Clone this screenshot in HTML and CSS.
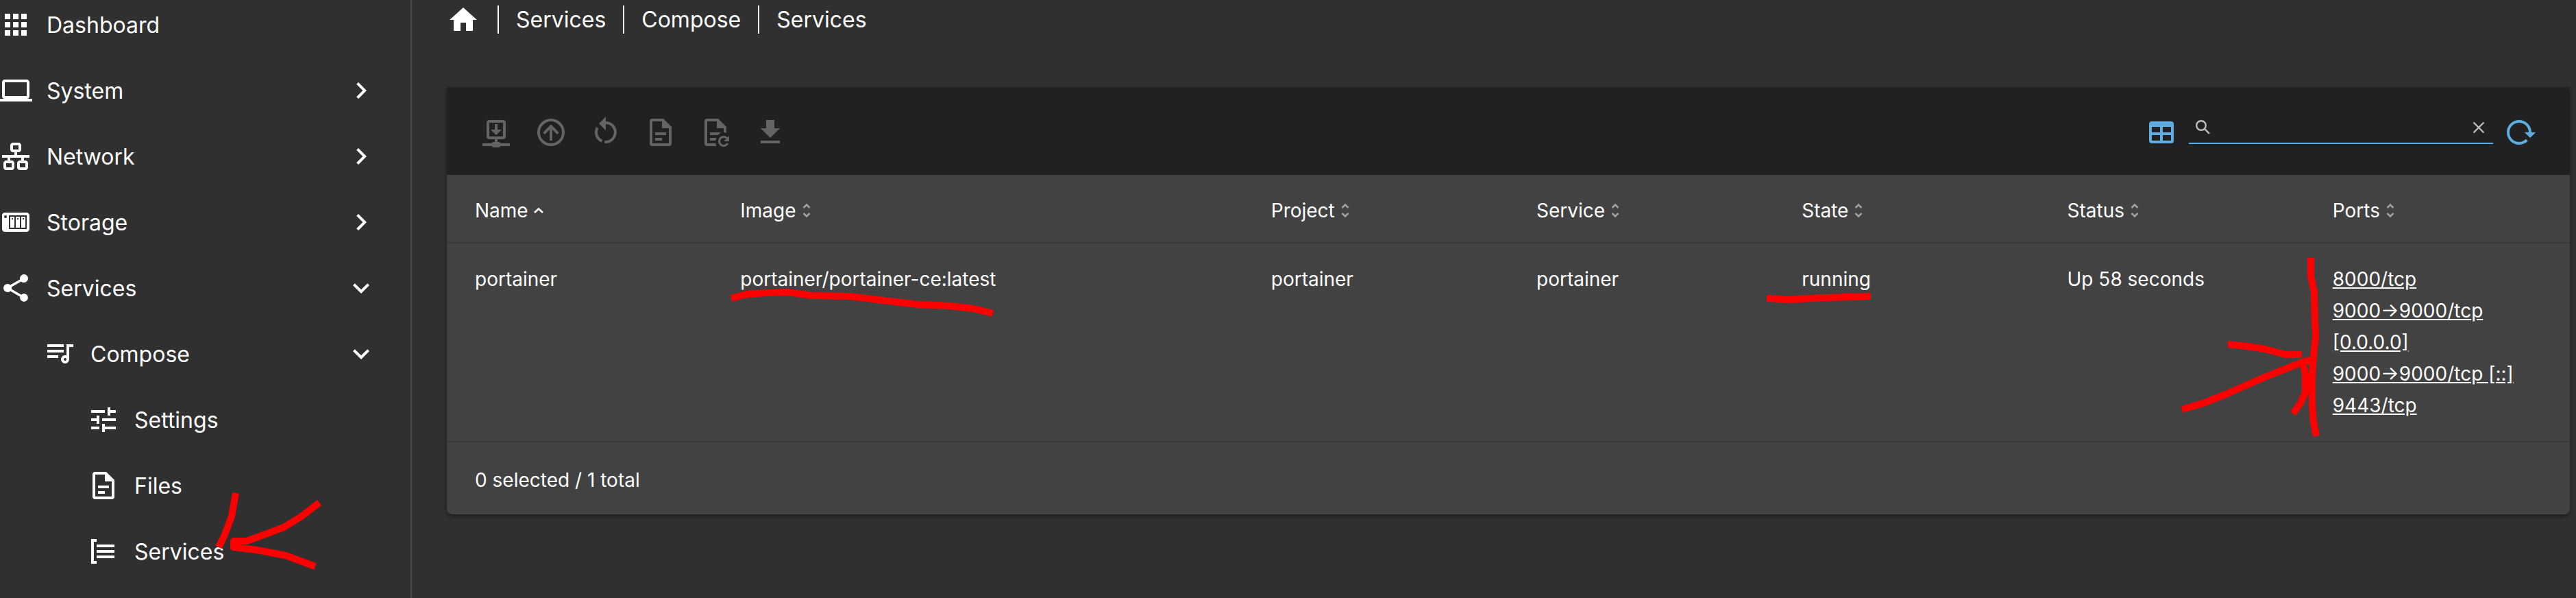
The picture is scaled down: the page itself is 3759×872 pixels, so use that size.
FILE: index.html
```html
<!DOCTYPE html>
<html lang="en">
<head>
<meta charset="utf-8">
<title>Services | Compose | Services</title>
<link rel="stylesheet" href="styles.css">
</head>
<body>
<div class="app">
  <nav class="sidebar" aria-label="Main">
    <a class="nav-item" href="#"><svg class="icon" viewBox="0 0 24 24"><path d="M16,20H20V16H16M16,14H20V10H16M10,8H14V4H10M16,8H20V4H16M10,14H14V10H10M4,14H8V10H4M4,20H8V16H4M10,20H14V16H10M4,8H8V4H4V8Z"/></svg><span class="nav-label">Dashboard</span></a>
    <a class="nav-item" href="#"><svg class="icon" viewBox="0 0 24 24"><path d="M4,6H20V16H4M20,18A2,2 0 0,0 22,16V6C22,4.89 21.1,4 20,4H4C2.89,4 2,4.89 2,6V16A2,2 0 0,0 4,18H0V20H24V18H20Z"/></svg><span class="nav-label">System</span><svg class="icon" viewBox="0 0 24 24"><path d="M8.59,16.58L13.17,12L8.59,7.41L10,6L16,12L10,18L8.59,16.58Z"/></svg></a>
    <a class="nav-item" href="#"><svg class="icon" viewBox="0 0 24 24"><path d="M10,2C8.89,2 8,2.89 8,4V7C8,8.11 8.89,9 10,9H11V11H2V13H6V15H5C3.89,15 3,15.89 3,17V20C3,21.11 3.89,22 5,22H9C10.11,22 11,21.11 11,20V17C11,15.89 10.11,15 9,15H8V13H16V15H15C13.89,15 13,15.89 13,17V20C13,21.11 13.89,22 15,22H19C20.11,22 21,21.11 21,20V17C21,15.89 20.11,15 19,15H18V13H22V11H13V9H14C15.11,9 16,8.11 16,7V4C16,2.89 15.11,2 14,2H10M10,4H14V7H10V4M5,17H9V20H5V17M15,17H19V20H15V17Z"/></svg><span class="nav-label">Network</span><svg class="icon" viewBox="0 0 24 24"><path d="M8.59,16.58L13.17,12L8.59,7.41L10,6L16,12L10,18L8.59,16.58Z"/></svg></a>
    <a class="nav-item" href="#"><svg class="icon" viewBox="0 0 24 24"><path fill-rule="evenodd" d="M4,5C2.89,5 2,5.89 2,7V17C2,18.11 2.89,19 4,19H20C21.11,19 22,18.11 22,17V7C22,5.89 21.11,5 20,5H4M4.5,7A1,1 0 0,1 5.5,8A1,1 0 0,1 4.5,9A1,1 0 0,1 3.5,8A1,1 0 0,1 4.5,7M7,7H20V17H7V7M8,8V16H11V8H8M12,8V16H15V8H12M16,8V16H19V8H16M9,9H10V10H9V9M13,9H14V10H13V9M17,9H18V10H17V9Z"/></svg><span class="nav-label">Storage</span><svg class="icon" viewBox="0 0 24 24"><path d="M8.59,16.58L13.17,12L8.59,7.41L10,6L16,12L10,18L8.59,16.58Z"/></svg></a>
    <a class="nav-item" href="#"><svg class="icon" viewBox="0 0 24 24"><path d="M18,16.08C17.24,16.08 16.56,16.38 16.04,16.85L8.91,12.7C8.96,12.47 9,12.24 9,12C9,11.76 8.96,11.53 8.91,11.3L15.96,7.19C16.5,7.69 17.21,8 18,8A3,3 0 0,0 21,5A3,3 0 0,0 18,2A3,3 0 0,0 15,5C15,5.24 15.04,5.47 15.09,5.7L8.04,9.81C7.5,9.31 6.79,9 6,9A3,3 0 0,0 3,12A3,3 0 0,0 6,15C6.79,15 7.5,14.69 8.04,14.19L15.16,18.34C15.11,18.55 15.08,18.77 15.08,19C15.08,20.61 16.39,21.91 18,21.91C19.61,21.91 20.92,20.61 20.92,19A2.92,2.92 0 0,0 18,16.08Z"/></svg><span class="nav-label">Services</span><svg class="icon" viewBox="0 0 24 24"><path d="M7.41,8.58L12,13.17L16.59,8.58L18,10L12,16L6,10L7.41,8.58Z"/></svg></a>
    <a class="nav-item level-1" href="#"><svg class="icon" viewBox="0 0 24 24"><path fill-rule="evenodd" d="M3,5H15V7H3V5M3,9H15V11H3V9M3,13H11V15H3V13M17,5H22V7H19V16A3,3 0 1,1 17,13.17V5M16,15A1,1 0 0,0 16,17A1,1 0 0,0 16,15Z"/></svg><span class="nav-label">Compose</span><svg class="icon" viewBox="0 0 24 24"><path d="M7.41,8.58L12,13.17L16.59,8.58L18,10L12,16L6,10L7.41,8.58Z"/></svg></a>
    <a class="nav-item level-2" href="#"><svg class="icon" viewBox="0 0 24 24"><path d="M3,17V19H9V17H3M3,5V7H13V5H3M13,21V19H21V17H13V15H11V21H13M7,9V11H3V13H7V15H9V9H7M21,13V11H11V13H21M15,9H17V7H21V5H17V3H15V9Z"/></svg><span class="nav-label">Settings</span></a>
    <a class="nav-item level-2" href="#"><svg class="icon" viewBox="0 0 24 24"><path d="M6,2A2,2 0 0,0 4,4V20A2,2 0 0,0 6,22H18A2,2 0 0,0 20,20V8L14,2H6M6,4H13V9H18V20H6V4M8,12V14H16V12H8M8,16V18H13V16H8Z"/></svg><span class="nav-label">Files</span></a>
    <a class="nav-item level-2" href="#"><svg class="icon" viewBox="0 0 24 24"><path d="M3,3H7V5H5V19H7V21H3V3M7,7H20V9H7V7M7,11H20V13H7V11M7,15H20V17H7V15Z"/></svg><span class="nav-label">Services</span></a>
  </nav>

  <main class="content">
    <nav class="breadcrumb" aria-label="Breadcrumb">
      <a class="crumb-home" href="#" aria-label="Home"><svg class="icon" viewBox="0 0 24 24"><path d="M10,20V14H14V20H19V12H22L12,3L2,12H5V20H10Z"/></svg></a>
      <a class="crumb" href="#">Services</a>
      <a class="crumb" href="#">Compose</a>
      <a class="crumb" href="#">Services</a>
    </nav>

    <section class="card">
      <div class="toolbar">
        <button class="tool" disabled aria-label="Pull"><svg class="icon" viewBox="0 0 24 24"><path fill-rule="evenodd" d="M7,3H17A2,2 0 0,1 19,5V15A2,2 0 0,1 17,17H13V19H14A1,1 0 0,1 15,20H22V22H15A1,1 0 0,1 14,23H10A1,1 0 0,1 9,22H2V20H9A1,1 0 0,1 10,19H11V17H7A2,2 0 0,1 5,15V5A2,2 0 0,1 7,3M7,5V15H17V5H7M11,6H13V10H16L12,14L8,10H11V6Z"/></svg></button>
        <button class="tool" disabled aria-label="Up"><svg class="icon" viewBox="0 0 24 24"><path d="M13,18V10L16.5,13.5L17.92,12.08L12,6.16L6.08,12.08L7.5,13.5L11,10V18H13M12,2A10,10 0 0,1 22,12A10,10 0 0,1 12,22A10,10 0 0,1 2,12A10,10 0 0,1 12,2M12,4A8,8 0 0,0 4,12A8,8 0 0,0 12,20A8,8 0 0,0 20,12A8,8 0 0,0 12,4Z"/></svg></button>
        <button class="tool" disabled aria-label="Restart"><svg class="icon" viewBox="0 0 24 24"><path d="M12,4C14.1,4 16.1,4.8 17.6,6.3C20.7,9.4 20.7,14.5 17.6,17.6C15.8,19.5 13.3,20.2 10.9,19.9L11.4,17.9C13.1,18.1 14.9,17.5 16.2,16.2C18.5,13.9 18.5,10.1 16.2,7.7C15.1,6.6 13.5,6 12,6V10.6L7,5.6L12,0.6V4M6.3,17.6C3.7,15 3.3,11 5.1,7.9L6.6,9.4C5.5,11.6 5.9,14.4 7.8,16.2C8.3,16.7 8.9,17.1 9.6,17.4L9,19.4C8,19 7.1,18.4 6.3,17.6Z"/></svg></button>
        <button class="tool" disabled aria-label="Logs"><svg class="icon" viewBox="0 0 24 24"><path d="M6,2A2,2 0 0,0 4,4V20A2,2 0 0,0 6,22H18A2,2 0 0,0 20,20V8L14,2H6M6,4H13V9H18V20H6V4M8,12V14H16V12H8M8,16V18H13V16H8Z"/></svg></button>
        <button class="tool" disabled aria-label="Refresh logs"><svg class="icon" viewBox="0 0 24 24"><path d="M6,2A2,2 0 0,0 4,4V20A2,2 0 0,0 6,22H12.8A7,7 0 0,1 12.1,20H6V4H13V9H18V12.1A7,7 0 0,1 20,12.3V8L14,2H6M8,12V14H14A7,7 0 0,1 16,12H8M8,16V18H12.1A7,7 0 0,1 12.8,16H8M18,14.5A4,4 0 1,0 21.7,20H20A2.5,2.5 0 1,1 19.8,16.7L18,18.5H22V14.5L20.8,15.7A4,4 0 0,0 18,14.5Z"/></svg></button>
        <button class="tool" disabled aria-label="Download"><svg class="icon" viewBox="0 0 24 24"><path d="M5,20H19V18H5M19,9H15V3H9V9H5L12,16L19,9Z"/></svg></button>
        <span class="spacer"></span>
        <button class="tool accent" aria-label="Columns"><svg class="icon" viewBox="0 0 24 24"><path d="M5,4H19A2,2 0 0,1 21,6V18A2,2 0 0,1 19,20H5A2,2 0 0,1 3,18V6A2,2 0 0,1 5,4M5,8V12H11V8H5M13,8V12H19V8H13M5,14V18H11V14H5M13,14V18H19V14H13Z"/></svg></button>
        <div class="search">
          <svg class="icon-thin" viewBox="0 0 28 28"><circle cx="10" cy="12" r="6.8"/><path d="M15,16.8L22,23.8"/></svg>
          <input class="search-input" type="text" aria-label="Search">
          <button class="clear" aria-label="Clear"><svg class="icon-thin" viewBox="0 0 28 28"><path d="M7.5,7.5L22.5,22.5M22.5,7.5L7.5,22.5"/></svg></button>
        </div>
        <button class="tool accent" aria-label="Reload"><svg class="icon" viewBox="0 0 24 24"><path d="M2 12C2 16.97 6.03 21 11 21C13.39 21 15.68 20.06 17.4 18.4L15.9 16.9C14.63 18.25 12.86 19 11 19C4.76 19 1.64 11.46 6.05 7.05C10.46 2.64 18 5.77 18 12H15L19 16H19.1L23 12H20C20 7.03 15.97 3 11 3C6.03 3 2 7.03 2 12Z"/></svg></button>
      </div>

      <table class="grid">
        <colgroup><col><col class="col-wide"><col><col><col><col><col></colgroup>
        <thead>
          <tr>
            <th aria-sort="ascending">Name<svg class="sort sorted" viewBox="0 0 20 28"><path d="M4,17L10,11.5L16,17"/></svg></th>
            <th>Image<svg class="sort" viewBox="0 0 20 28"><path d="M5.5,10L10,5.5L14.5,10M5.5,18L10,22.5L14.5,18"/></svg></th>
            <th>Project<svg class="sort" viewBox="0 0 20 28"><path d="M5.5,10L10,5.5L14.5,10M5.5,18L10,22.5L14.5,18"/></svg></th>
            <th>Service<svg class="sort" viewBox="0 0 20 28"><path d="M5.5,10L10,5.5L14.5,10M5.5,18L10,22.5L14.5,18"/></svg></th>
            <th>State<svg class="sort" viewBox="0 0 20 28"><path d="M5.5,10L10,5.5L14.5,10M5.5,18L10,22.5L14.5,18"/></svg></th>
            <th>Status<svg class="sort" viewBox="0 0 20 28"><path d="M5.5,10L10,5.5L14.5,10M5.5,18L10,22.5L14.5,18"/></svg></th>
            <th>Ports<svg class="sort" viewBox="0 0 20 28"><path d="M5.5,10L10,5.5L14.5,10M5.5,18L10,22.5L14.5,18"/></svg></th>
          </tr>
        </thead>
        <tbody>
          <tr>
            <td>portainer</td>
            <td>portainer/portainer-ce:latest</td>
            <td>portainer</td>
            <td>portainer</td>
            <td>running</td>
            <td>Up 58 seconds</td>
            <td><a href="#">8000/tcp</a><br><a href="#">9000→9000/tcp [0.0.0.0]</a><br><a href="#">9000→9000/tcp [::]</a><br><a href="#">9443/tcp</a></td>
          </tr>
        </tbody>
      </table>
      <div class="card-footer">0 selected / 1 total</div>
    </section>
  </main>

  <svg class="marks" width="3759" height="872" aria-hidden="true">
    <path d="M344,719L338,753L327,782L319,798"/>
    <path d="M466,733L440,753L414,769L390,778L360,789L341,789V798L375,802L417,810L460,826"/>
    <path d="M1067,435L1090,429L1120,427L1150,426L1185,431L1240,432L1280,437L1340,444L1385,446L1420,450L1449,457"/>
    <path d="M2578,435L2610,437L2660,434L2700,433L2730,432"/>
    <path d="M3372,376V403L3377,425L3378,470L3379,490L3376,520L3374,550L3374,590L3376,615L3380,636"/>
    <path d="M3251,502L3280,505L3305,509L3335,517L3359,517"/>
    <path d="M3184,597L3215,588L3250,574L3300,552L3350,532L3366,526H3376"/>
    <path d="M3360,526L3364,545V572L3357,588L3346,603"/>
  </svg>
</div>
</body>
</html>
```
FILE: styles.css
```css
* {
  box-sizing: border-box;
}

body {
  margin: 0;
  background: #303030;
  color: #fff;
  font-family: Inter, Roboto, sans-serif;
  font-size: 28px;
  line-height: 46px;
}

a {
  color: inherit;
}

button {
  border: 0;
  padding: 0;
  background: none;
  color: inherit;
  cursor: pointer;
}

.app {
  position: relative;
  display: flex;
  min-height: 100vh;
  overflow: hidden;
}

.icon {
  display: block;
  flex: none;
  width: 48px;
  height: 48px;
  fill: currentColor;
}

.icon-thin {
  display: block;
  flex: none;
  width: 28px;
  height: 28px;
  fill: none;
  stroke: currentColor;
  stroke-width: 2.4;
}

/* Sidebar */
.sidebar {
  flex: none;
  width: 602px;
  margin-top: -12px;
  margin-left: -1px;
  border-right: 2px solid #4b4b4b;
}

.nav-item {
  display: flex;
  align-items: center;
  height: 96px;
  padding-right: 48px;
  font-size: 32px;
  text-decoration: none;
}

.nav-label {
  flex: 1;
  padding-top: 2px;
  margin-left: 21px;
}

.level-1 {
  padding-left: 64px;
}

.level-2 {
  padding-left: 128px;
}

/* Content */
.content {
  flex: 1;
  min-width: 0;
  padding: 8px 9px 0 51px;
}

.breadcrumb {
  display: flex;
  align-items: center;
  height: 41px;
  margin-bottom: 78px;
  font-size: 32px;
}

.crumb-home {
  margin-right: 26px;
}

.crumb {
  border-left: 2px solid #fff;
  padding: 0 25px;
  line-height: 41px;
  text-decoration: none;
}

.card {
  overflow: hidden;
  border-radius: 0 0 8px 8px;
  background: #424242;
  box-shadow: 0 4px 4px rgba(0, 0, 0, 0.2), 0 2px 8px rgba(0, 0, 0, 0.2);
}

.toolbar {
  display: flex;
  align-items: center;
  height: 128px;
  padding: 4px 32px 0;
  background: #212121;
}

.tool {
  display: flex;
  align-items: center;
  justify-content: center;
  width: 80px;
  height: 80px;
}

.tool:disabled {
  color: #646464;
}

.accent {
  color: #5dade2;
}

.spacer {
  flex: 1;
}

.search {
  display: flex;
  align-items: center;
  align-self: flex-end;
  width: 444px;
  height: 48px;
  padding: 0 8px;
  margin-bottom: 45px;
  border-bottom: 2px solid #5dade2;
  color: #bdbdbd;
}

.search-input {
  flex: 1;
  min-width: 0;
  border: 0;
  outline: 0;
  background: none;
  color: #fff;
  font: inherit;
}

/* Table */
.grid {
  width: 100%;
  table-layout: fixed;
  border-collapse: collapse;
}

.col-wide {
  width: 25%;
}

.grid th,
.grid td {
  padding: 29px 40px 29px 41px;
  border-bottom: 2px solid #393939;
  font-weight: 400;
  text-align: left;
  vertical-align: top;
}

.grid th {
  padding-bottom: 23px;
}

.sort {
  width: 20px;
  height: 28px;
  margin-left: 5px;
  vertical-align: -4px;
  fill: none;
  stroke: #a0a0a0;
  stroke-width: 2.6;
}

.sorted {
  stroke: #fff;
}

.card-footer {
  padding: 32px 41px 27px;
}

/* Hand-drawn marks over the page */
.marks {
  position: absolute;
  top: 0;
  left: 0;
  fill: none;
  stroke: #f00;
  stroke-width: 10;
  stroke-linejoin: round;
  pointer-events: none;
}
```
